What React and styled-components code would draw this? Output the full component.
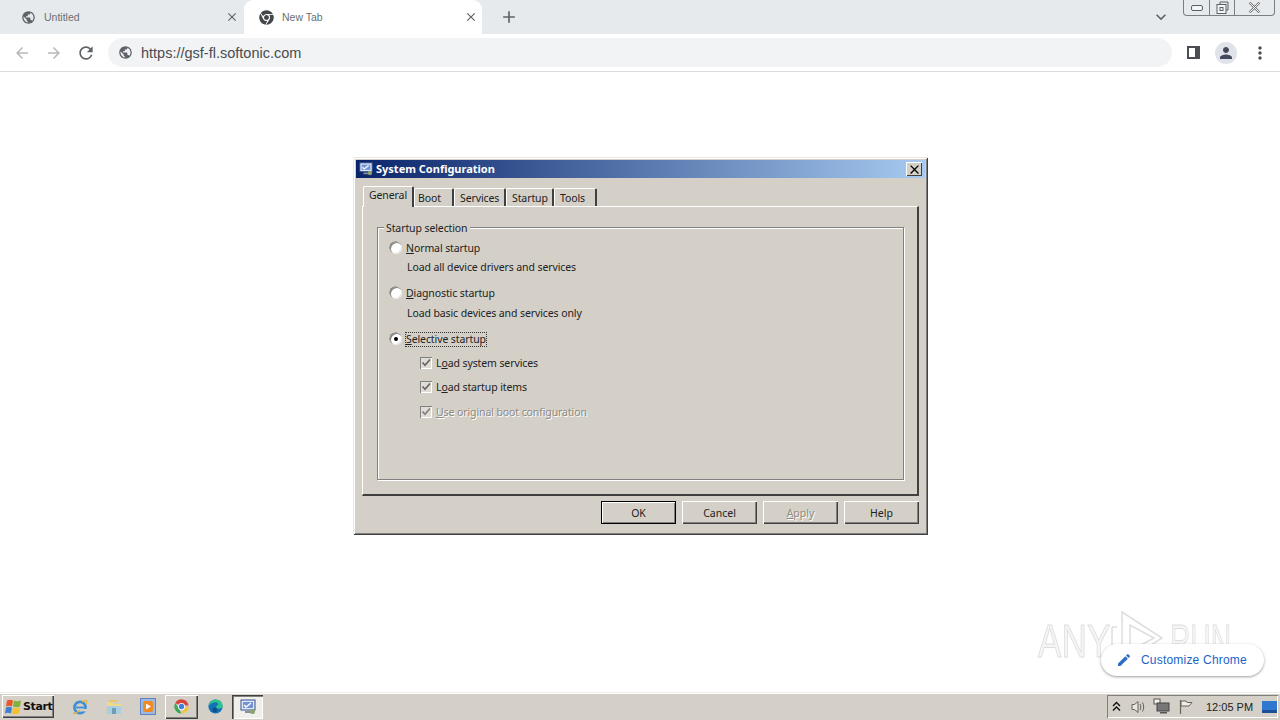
import React from "react";
import styled, { createGlobalStyle } from "styled-components";
import { MdPublic, MdArrowBack, MdArrowForward, MdRefresh, MdClose, MdAdd, MdExpandMore, MdMoreVert, MdPerson, MdEdit } from "react-icons/md";
import { FaChrome } from "react-icons/fa";

const GlobalStyle = createGlobalStyle`
  html, body { margin: 0; padding: 0; background: #fff; }
  body { font-family: "Liberation Sans", Arial, sans-serif; }
`;

const Page = styled.div`
  position: relative;
  width: 1280px;
  height: 720px;
  overflow: hidden;
  display: flex;
  flex-direction: column;
`;

/* chrome window */
const TabStrip = styled.div`
  height: 34px;
  flex: none;
  background: #e7eaed;
  display: flex;
  align-items: stretch;
  position: relative;
`;
const Tab = styled.div`
  width: ${(p) => p.$w}px;
  display: flex;
  align-items: center;
  padding: 0 ${(p) => p.$pr}px 0 ${(p) => p.$pl}px;
  box-sizing: border-box;
  background: ${(p) => (p.$active ? "#fff" : "transparent")};
  border-radius: 9px 9px 0 0;
  color: #5f6368;
  svg { flex: none; }
`;
const TabTitle = styled.span`
  margin-left: 8px;
  flex: 1;
  color: #6b6f73;
  font-size: 10.5px;
`;
const NewTab = styled.div`
  margin-left: 17px;
  display: flex;
  align-items: center;
  color: #5f6368;
`;
const TabSpacer = styled.div`
  flex: 1;
`;
const ListArrow = styled.div`
  display: flex;
  align-items: center;
  margin-right: 12px;
  color: #5f6368;
`;
const WindowControls = styled.div`
  width: 92px;
  height: 16px;
  margin-right: 5px;
  box-sizing: border-box;
  border: 1px solid #7a7f84;
  border-top: none;
  border-radius: 0 0 4px 4px;
  display: flex;
  background: #e7eaed;
`;
const WinBtn = styled.div`
  width: ${(p) => p.$w}px;
  display: flex;
  align-items: center;
  justify-content: center;
  box-sizing: border-box;
  border-right: ${(p) => (p.$last ? "none" : "1px solid #7a7f84")};
`;
const Toolbar = styled.div`
  height: 38px;
  flex: none;
  box-sizing: border-box;
  background: #fff;
  border-bottom: 1px solid #dadce0;
  display: flex;
  align-items: center;
  padding: 0 0 0 12px;
`;
const NavBtn = styled.div`
  width: 20px;
  margin-right: 12px;
  display: flex;
  justify-content: center;
  color: ${(p) => (p.$off ? "#b6b9bc" : "#5f6368")};
`;
const Omnibox = styled.div`
  width: 1064px;
  height: 29px;
  border-radius: 15px;
  background: #f1f3f4;
  display: flex;
  align-items: center;
  padding-left: 10px;
  box-sizing: border-box;
  color: #5f6368;
`;
const Url = styled.span`
  margin-left: 8px;
  font-size: 14.5px;
  color: #494c50;
`;
const ToolIcons = styled.div`
  display: flex;
  align-items: center;
  color: #5f6368;
`;
const SidePanel = styled.div`
  width: 13px;
  height: 13px;
  margin-left: 15px;
  box-sizing: border-box;
  border: 2px solid #4a4d52;
  border-right-width: 5px;
  background: #fff;
`;
const Avatar = styled.div`
  width: 22px;
  height: 22px;
  margin-left: 15px;
  border-radius: 50%;
  background: #e1e3ea;
  color: #454b5e;
  display: flex;
  align-items: center;
  justify-content: center;
`;
const Dots = styled.div`
  margin-left: 13px;
  display: flex;
  color: #4a4d52;
`;

/* content */
const Content = styled.div`
  flex: 1;
  background: #fff;
  padding: 85px 0 0 353px;
`;

/* dialog */
const Dialog = styled.div`
  width: 575px;
  height: 378px;
  box-sizing: border-box;
  background: #d4d0c8;
  padding: 3px;
  font-family: "Noto Sans", "Liberation Sans", sans-serif;
  box-shadow: inset 1px 1px 0 #ece9e0, inset -1px -1px 0 #404040, inset 2px 2px 0 #fff, inset -2px -2px 0 #808080;
  display: flex;
  flex-direction: column;
`;
const TitleBar = styled.div`
  height: 18px;
  flex: none;
  background: linear-gradient(90deg, #0a246a, #a6caf0);
  display: flex;
  align-items: center;
  padding: 0 3px 0 3px;
`;
const Title = styled.span`
  margin-left: 3px;
  padding-bottom: 2px;
  flex: 1;
  color: #fff;
  font-size: 11px;
  font-weight: 700;
`;
const TitleClose = styled.div`
  width: 16px;
  height: 14px;
  background: #d4d0c8;
  box-shadow: inset 1px 1px 0 #fff, inset -1px -1px 0 #404040;
  display: flex;
  align-items: center;
  justify-content: center;
`;
const TabRow = styled.div`
  height: 20px;
  margin: 8px 6px 0 7px;
  flex: none;
  display: flex;
  align-items: flex-end;
  position: relative;
  z-index: 1;
`;
const DlgTab = styled.div`
  width: ${(p) => p.$w}px;
  height: ${(p) => (p.$active ? 21 : 18)}px;
  margin-bottom: ${(p) => (p.$active ? -1 : 0)}px;
  box-sizing: border-box;
  background: #d4d0c8;
  border-top: 1px solid #fff;
  border-left: 1px solid #fff;
  border-right: 2px solid #404040;
  border-radius: 2px 2px 0 0;
  color: #222;
  font-size: 10.5px;
  letter-spacing: -0.1px;
  line-height: ${(p) => (p.$active ? 17 : 18)}px;
  padding-left: ${(p) => p.$pl}px;
`;
const TabPanel = styled.div`
  height: 290px;
  margin: 0 6px;
  flex: none;
  box-sizing: border-box;
  border-top: 1px solid #fff;
  border-left: 1px solid #fff;
  border-right: 2px solid #404040;
  border-bottom: 2px solid #404040;
  padding: 20px 13px 14px 14px;
`;
const GroupBox = styled.div`
  position: relative;
  height: 253px;
  box-sizing: border-box;
  border: 1px solid #808080;
  box-shadow: 1px 1px 0 #fff, inset 1px 1px 0 #fff;
  padding: 11px 0 0 12px;
`;
const Legend = styled.span`
  position: absolute;
  left: 6px;
  top: -6px;
  padding: 0 2px;
  background: #d4d0c8;
  font-size: 10.5px;
  letter-spacing: -0.1px;
  line-height: 13px;
  color: #222;
`;
const OptionRow = styled.div`
  height: 18px;
  margin-top: ${(p) => p.$mt || 0}px;
  margin-left: ${(p) => p.$ml || 0}px;
  display: flex;
  align-items: center;
  font-size: 10.5px;
  letter-spacing: -0.1px;
  color: ${(p) => (p.$disabled ? "#8c8a85" : "#222")};
  ${(p) => p.$disabled && "text-shadow: 1px 1px 0 #fff;"}
`;
const Description = styled.div`
  height: 18px;
  margin-left: 17px;
  margin-top: ${(p) => p.$mt || 0}px;
  line-height: 18px;
  font-size: 10.5px;
  letter-spacing: -0.1px;
  color: #222;
`;
const Radio = styled.span`
  width: 12px;
  height: 12px;
  flex: none;
  border-radius: 50%;
  margin-right: 4px;
  background: #fff;
  box-shadow: inset 1px 1px 0 #808080, inset -1px -1px 0 #e8e6e1, -0.5px -0.5px 0 #606060;
  display: flex;
  align-items: center;
  justify-content: center;
  &::after {
    content: "";
    width: 4px;
    height: 4px;
    border-radius: 50%;
    background: ${(p) => (p.$on ? "#000" : "transparent")};
  }
`;
const Check = styled.span`
  width: 12px;
  height: 12px;
  flex: none;
  margin-right: 4px;
  background: #e0ddd6;
  box-shadow: inset 1px 1px 0 #808080, inset -1px -1px 0 #fff;
  display: flex;
  align-items: center;
  justify-content: center;
`;
const Focused = styled.span`
  outline: 1px dotted #333;
  line-height: 13px;
`;
const U = styled.span`
  text-decoration: underline;
  text-underline-offset: 1px;
`;
const ButtonRow = styled.div`
  display: flex;
  justify-content: flex-end;
  gap: 6px;
  padding: 5px 6px 0 0;
`;
const DlgButton = styled.div`
  width: 75px;
  height: 23px;
  box-sizing: border-box;
  display: flex;
  align-items: center;
  justify-content: center;
  font-size: 10.5px;
  color: ${(p) => (p.$disabled ? "#8c8a85" : "#222")};
  ${(p) => p.$disabled && "text-shadow: 1px 1px 0 #fff;"}
  box-shadow: ${(p) =>
    p.$default
      ? "inset 0 0 0 1px #000, inset 2px 2px 0 #fff, inset -2px -2px 0 #808080"
      : "inset 1px 1px 0 #fff, inset -1px -1px 0 #404040, inset -2px -2px 0 #808080"};
`;

/* overlays */
const Watermark = styled.div`
  position: absolute;
  left: 1038px;
  top: 608px;
  width: 230px;
  height: 60px;
  display: flex;
  align-items: center;
  color: rgba(236, 236, 236, 0.55);
  -webkit-text-stroke: 1px #dedede;
  font-size: 47px;
  line-height: 60px;
`;
const MarkText = styled.span`
  display: inline-block;
  flex: none;
  width: ${(p) => p.$w}px;
  transform: scaleX(${(p) => p.$s});
  transform-origin: left center;
  padding-top: 6px;
  white-space: nowrap;
`;
const CustomizeBtn = styled.div`
  position: absolute;
  left: 1101px;
  top: 644px;
  width: 163px;
  height: 32px;
  border-radius: 16px;
  background: #fff;
  box-shadow: 0 1px 3px rgba(60, 64, 67, 0.35), 0 1px 2px rgba(60, 64, 67, 0.2);
  display: flex;
  align-items: center;
  padding-left: 15px;
  box-sizing: border-box;
  color: #1a64c8;
  font-size: 12px;
  letter-spacing: 0.2px;
  svg { margin-right: 9px; }
`;

/* taskbar */
const Taskbar = styled.div`
  height: 28px;
  flex: none;
  box-sizing: border-box;
  background: #d4d0c8;
  border-top: 1px solid #efeee9;
  box-shadow: inset 0 1px 0 #fff;
  display: flex;
  align-items: center;
  padding: 0 2px;
`;
const StartButton = styled.div`
  width: 52px;
  height: 23px;
  flex: none;
  box-sizing: border-box;
  display: flex;
  align-items: center;
  padding-left: 2px;
  gap: 1px;
  box-shadow: inset 1px 1px 0 #fff, inset -1px -1px 0 #404040, inset -2px -2px 0 #808080;
  font-size: 11px;
  font-weight: 700;
  font-family: "DejaVu Sans", sans-serif;
  letter-spacing: -0.4px;
  color: #111;
  svg { flex: none; }
`;
const QuickIcon = styled.div`
  width: ${(p) => p.$w || 34}px;
  height: 24px;
  margin-left: ${(p) => p.$ml || 0}px;
  display: flex;
  align-items: center;
  justify-content: center;
  flex: none;
  box-sizing: border-box;
  ${(p) => p.$raised && "box-shadow: inset 1px 1px 0 #fff, inset -1px -1px 0 #404040, inset -2px -2px 0 #808080;"}
  ${(p) => p.$pressed && "background: #f1efe9; box-shadow: inset 1px 1px 0 #404040, inset 2px 2px 0 #808080, inset -1px -1px 0 #fff;"}
`;
const Tray = styled.div`
  margin-left: auto;
  width: 171px;
  height: 23px;
  box-sizing: border-box;
  display: flex;
  align-items: center;
  padding-left: 5px;
  box-shadow: inset 1px 1px 0 #808080, inset -1px -1px 0 #fff;
  font-size: 11px;
  color: #222;
`;
const Clock = styled.span`
  margin-left: 8px;
  width: 56px;
  white-space: nowrap;
`;
const PlayMark = styled.svg`
  flex: none;
  margin: 0 4px 0 0;
`;

const Globe = ({ size = 15 }) => <MdPublic size={size} />;

const MsconfigIcon = ({ size = 16 }) => (
  <svg width={size} height={size} viewBox="0 0 16 16">
    <rect x="1" y="1" width="14" height="10" fill="#dfe6f5" stroke="#34508f" />
    <rect x="3" y="3" width="10" height="6" fill="#6f93d6" />
    <path d="M4 6l2 2 5-4" stroke="#fff" strokeWidth="1.4" fill="none" />
    <rect x="5" y="12" width="6" height="2" fill="#8a8f98" />
    <circle cx="12.5" cy="12.5" r="2.5" fill="#8aa46f" />
  </svg>
);

const StartFlag = () => (
  <svg width="18" height="17" viewBox="0 0 18 16">
    <path d="M3 2c2-1 4-1 6 0L8 8C6 7 4 7 2 8z" fill="#e8562a" />
    <path d="M10 2c2 1 4 1 7 0l-1 6c-2 1-5 1-7 0z" fill="#7db33c" />
    <path d="M2 9c2-1 4-1 6 0l-1 6c-2-1-4-1-6 0z" fill="#3f7fd0" />
    <path d="M9 9c2 1 4 1 7 0l-1 6c-2 1-5 1-7 0z" fill="#f2c230" />
  </svg>
);

const IeIcon = () => (
  <svg width="18" height="18" viewBox="0 0 18 18">
    <circle cx="9" cy="9.5" r="5.6" fill="none" stroke="#3d8fd8" strokeWidth="2.6" />
    <rect x="5" y="8.6" width="8.5" height="1.8" fill="#3d8fd8" />
    <rect x="10" y="11" width="6" height="2.4" fill="#d4d0c8" />
    <path d="M3 14C1 17 5 16 9 12M11 4c4-3 6-2 4 2" stroke="#e2b33a" strokeWidth="1.1" fill="none" />
  </svg>
);

const FolderIcon = () => (
  <svg width="16" height="17" viewBox="0 0 16 17">
    <path d="M1 4h5l1 2h8v10H1z" fill="#f1d98a" />
    <rect x="1" y="8" width="14" height="8" fill="#a9cfe0" />
    <rect x="6" y="10" width="4" height="6" fill="#6f9db8" />
    <rect x="3" y="2" width="8" height="2" fill="#e9c56a" />
  </svg>
);

const MediaIcon = () => (
  <svg width="16" height="17" viewBox="0 0 16 17">
    <rect x="0.5" y="0.5" width="15" height="16" fill="#9db9e2" stroke="#5c84c4" />
    <rect x="3" y="3" width="10" height="11" rx="2" fill="#ee8a1f" />
    <path d="M6 5.5l5 3-5 3z" fill="#fff" />
  </svg>
);

const ChromeIcon = () => (
  <svg width="17" height="17" viewBox="0 0 24 24">
    <path d="M12 12L3.3 7A10 10 0 0 1 21.9 10.5H12z" fill="#d9453a" />
    <path d="M12 22A10 10 0 0 1 3.3 7L8.5 15z" fill="#3ba757" />
    <path d="M21.9 10.5A10 10 0 0 1 12 22l4-7z" fill="#f6c624" />
    <circle cx="12" cy="12" r="5" fill="#fff" />
    <circle cx="12" cy="12" r="3.8" fill="#3f7fe0" />
  </svg>
);

const EdgeIcon = () => (
  <svg width="17" height="17" viewBox="0 0 24 24">
    <circle cx="12" cy="12" r="10" fill="#1272b8" />
    <path d="M2 12C3 5 8 2 12 2c6 0 10 4 10 9 0 3-3 4-6 4-2 0-3-1-3-2 0-3 3-2 3-5-2-3-10-3-14 4z" fill="#2fc58a" />
    <circle cx="11" cy="17" r="3.5" fill="#0b4f8f" />
  </svg>
);

const TrayArrows = () => (
  <svg width="9" height="11" viewBox="0 0 9 11">
    <path d="M1 5l3.5-3.5L8 5M1 9.5L4.5 6 8 9.5" stroke="#111" strokeWidth="1.4" fill="none" />
  </svg>
);

const SpeakerIcon = () => (
  <svg width="18" height="16" viewBox="0 0 18 16">
    <path d="M3 5.5h2.5L9 2.5v11L5.5 10.5H3z" fill="#e8e6e1" stroke="#66635d" />
    <path d="M11 5c1 1.8 1 4.2 0 6M13.5 3.5c1.6 2.8 1.6 6.2 0 9" stroke="#66635d" fill="none" />
  </svg>
);

const NetworkIcon = () => (
  <svg width="18" height="17" viewBox="0 0 18 17">
    <rect x="1" y="1" width="6" height="5" fill="#f4f2ec" stroke="#555" />
    <rect x="4" y="5" width="12" height="8" fill="#777" stroke="#444" />
    <rect x="7" y="14" width="7" height="1.5" fill="#555" />
  </svg>
);

const FlagIcon = () => (
  <svg width="16" height="16" viewBox="0 0 16 16">
    <path d="M2.5 1v14" stroke="#66635d" strokeWidth="1.2" />
    <path d="M3 2h5l1 1.5h5l-3 3.5H3z" fill="#efede7" stroke="#66635d" />
  </svg>
);

const DesktopIcon = () => (
  <svg width="15" height="14" viewBox="0 0 15 14">
    <rect x="0" y="1" width="15" height="12" fill="#2f78d0" />
    <rect x="0" y="10" width="15" height="3" fill="#1c4f96" />
  </svg>
);

const CheckMark = ({ color = "#666" }) => (
  <svg width="10" height="10" viewBox="0 0 10 10">
    <path d="M1.5 4.5l2.5 2.8 5-5.8" stroke={color} strokeWidth="1.7" fill="none" />
  </svg>
);

const App = () => {
  return (
    <Page>
      <GlobalStyle />
      <TabStrip>
        <Tab $w={244} $pl={21} $pr={5}>
          <Globe />
          <TabTitle>Untitled</TabTitle>
          <MdClose size={14} />
        </Tab>
        <Tab $w={238} $pl={15} $pr={4} $active>
          <FaChrome size={15} color="#44474b" />
          <TabTitle>New Tab</TabTitle>
          <MdClose size={14} />
        </Tab>
        <NewTab>
          <MdAdd size={20} />
        </NewTab>
        <TabSpacer />
        <ListArrow>
          <MdExpandMore size={20} />
        </ListArrow>
        <WindowControls>
          <WinBtn $w={26}>
            <svg width="12" height="6" viewBox="0 0 12 6">
              <rect x="0.5" y="0.5" width="11" height="5" rx="1.5" fill="#f4f5f6" stroke="#5a5f64" />
            </svg>
          </WinBtn>
          <WinBtn $w={25}>
            <svg width="13" height="13" viewBox="0 0 13 13">
              <path d="M4 3V1h8v8h-2" fill="none" stroke="#5a5f64" />
              <rect x="1" y="3.5" width="9" height="9" fill="#f4f5f6" stroke="#5a5f64" />
              <rect x="4" y="6.5" width="3" height="3" fill="none" stroke="#5a5f64" />
            </svg>
          </WinBtn>
          <WinBtn $w={39} $last>
            <svg width="13" height="11" viewBox="0 0 13 11">
              <path d="M1.5 0.5l10 10M11.5 0.5l-10 10" stroke="#777" strokeWidth="2.4" />
              <path d="M1.5 0.5l10 10M11.5 0.5l-10 10" stroke="#f4f5f6" strokeWidth="1" />
            </svg>
          </WinBtn>
        </WindowControls>
      </TabStrip>
      <Toolbar>
        <NavBtn $off>
          <MdArrowBack size={18} />
        </NavBtn>
        <NavBtn $off>
          <MdArrowForward size={18} />
        </NavBtn>
        <NavBtn>
          <MdRefresh size={20} />
        </NavBtn>
        <Omnibox>
          <Globe />
          <Url>https://gsf-fl.softonic.com</Url>
        </Omnibox>
        <ToolIcons>
          <SidePanel />
          <Avatar>
            <MdPerson size={18} />
          </Avatar>
          <Dots>
            <MdMoreVert size={20} />
          </Dots>
        </ToolIcons>
      </Toolbar>

      <Content>
        <Dialog>
          <TitleBar>
            <MsconfigIcon size={14} />
            <Title>System Configuration</Title>
            <TitleClose>
              <MdClose size={15} color="#000" />
            </TitleClose>
          </TitleBar>
          <TabRow>
            <DlgTab $w={51} $pl={5} $active>General</DlgTab>
            <DlgTab $w={40} $pl={3}>Boot</DlgTab>
            <DlgTab $w={52} $pl={5}>Services</DlgTab>
            <DlgTab $w={48} $pl={5}>Startup</DlgTab>
            <DlgTab $w={43} $pl={5}>Tools</DlgTab>
          </TabRow>
          <TabPanel>
            <GroupBox>
              <Legend>Startup selection</Legend>
              <OptionRow>
                <Radio />
                <span><U>N</U>ormal startup</span>
              </OptionRow>
              <Description $mt={1}>Load all device drivers and services</Description>
              <OptionRow $mt={8}>
                <Radio />
                <span><U>D</U>iagnostic startup</span>
              </OptionRow>
              <Description $mt={2}>Load basic devices and services only</Description>
              <OptionRow $mt={8}>
                <Radio $on />
                <Focused><U>S</U>elective startup</Focused>
              </OptionRow>
              <OptionRow $mt={6} $ml={30}>
                <Check><CheckMark /></Check>
                <span>L<U>o</U>ad system services</span>
              </OptionRow>
              <OptionRow $mt={6} $ml={30}>
                <Check><CheckMark /></Check>
                <span>L<U>o</U>ad startup items</span>
              </OptionRow>
              <OptionRow $mt={7} $ml={30} $disabled>
                <Check><CheckMark color="#808080" /></Check>
                <span><U>U</U>se original boot configuration</span>
              </OptionRow>
            </GroupBox>
          </TabPanel>
          <ButtonRow>
            <DlgButton $default>OK</DlgButton>
            <DlgButton>Cancel</DlgButton>
            <DlgButton $disabled><span><U>A</U>pply</span></DlgButton>
            <DlgButton>Help</DlgButton>
          </ButtonRow>
        </Dialog>
      </Content>

      <Watermark>
        <MarkText $w={72} $s={0.75}>ANY</MarkText>
        <PlayMark width="56" height="58" viewBox="0 0 56 58">
          <path d="M2 18V52M2 18h5M12 3v52l40-26z M20 16v26l24-13z" fill="none" stroke="#dedede" strokeWidth="1.5" />
        </PlayMark>
        <MarkText $w={66} $s={0.6}>RUN</MarkText>
      </Watermark>
      <CustomizeBtn>
        <MdEdit size={16} color="#2f6fc4" />
        Customize Chrome
      </CustomizeBtn>

      <Taskbar>
        <StartButton>
          <StartFlag />
          Start
        </StartButton>
        <QuickIcon $ml={9}><IeIcon /></QuickIcon>
        <QuickIcon><FolderIcon /></QuickIcon>
        <QuickIcon><MediaIcon /></QuickIcon>
        <QuickIcon $w={33} $raised><ChromeIcon /></QuickIcon>
        <QuickIcon><EdgeIcon /></QuickIcon>
        <QuickIcon $w={31} $pressed><MsconfigIcon /></QuickIcon>
        <Tray>
          <TrayArrows />
          <QuickIcon $w={24} $ml={5}><SpeakerIcon /></QuickIcon>
          <QuickIcon $w={24}><NetworkIcon /></QuickIcon>
          <QuickIcon $w={24}><FlagIcon /></QuickIcon>
          <Clock>12:05 PM</Clock>
          <DesktopIcon />
        </Tray>
      </Taskbar>
    </Page>
  );
};

export default App;
